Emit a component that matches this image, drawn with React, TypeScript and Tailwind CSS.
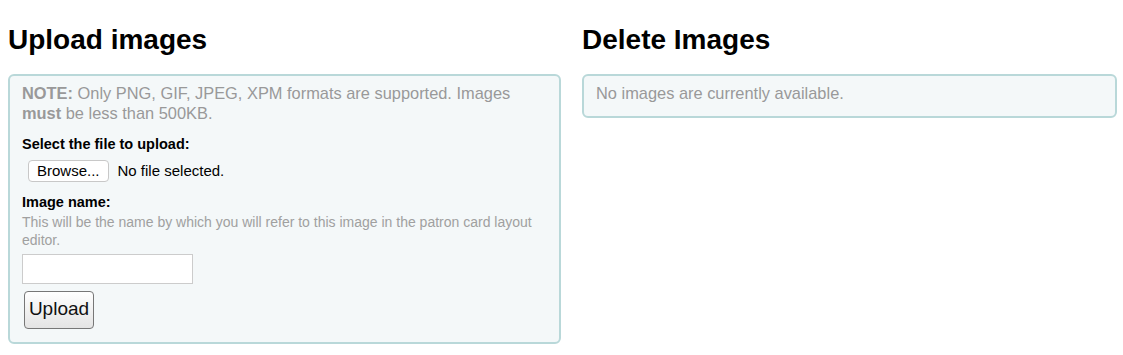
import React from "react";

export default function App() {
  return (
    <div className="w-[1123px] h-[355px] bg-white text-black" style={{ fontFamily: '"Liberation Sans", Arial, sans-serif' }}>
      <div className="flex gap-[21px] pl-[8px] pt-[24px]">
        <div className="w-[553px]">
          <h2 className="text-[28px] font-bold leading-[32px] mb-[18px]">Upload images</h2>
          <div className="border-2 border-[#b9d8d9] rounded-[6px] bg-[#f4f8f9] px-[12px] pt-[7px] pb-[13px] h-[270px]">
            <p className="text-[16.4px] leading-[20px] text-[#999999]">
              <b>NOTE:</b> Only PNG, GIF, JPEG, XPM formats are supported. Images
              <br />
              <b>must</b> be less than 500KB.
            </p>
            <div className="mt-[12px] text-[14.5px] font-bold leading-[18px]">Select the file to upload:</div>
            <div className="mt-[7px] flex items-center ml-[6px]">
              <button className="h-[22px] px-[8px] border border-[#c8c8c8] rounded-[4px] bg-white text-[15px] leading-[18px]">Browse...</button>
              <span className="ml-[9px] text-[15px]">No file selected.</span>
            </div>
            <div className="mt-[10px] text-[14.5px] font-bold leading-[18px]">Image name:</div>
            <p className="mt-[2px] text-[14px] leading-[18px] text-[#a0a0a0]">
              This will be the name by which you will refer to this image in the patron card layout
              <br />
              editor.
            </p>
            <input type="text" className="block mt-[5px] w-[171px] h-[30px] border border-[#cccccc] bg-white" />
            <button className="block mt-[7px] ml-[2px] w-[70px] h-[38px] border border-[#777777] rounded-[4px] bg-gradient-to-b from-[#ffffff] to-[#e4e4e4] text-[19px] text-[#111]">Upload</button>
          </div>
        </div>
        <div className="w-[535px]">
          <h2 className="text-[28px] font-bold leading-[32px] mb-[18px]">Delete Images</h2>
          <div className="border-2 border-[#b9d8d9] rounded-[6px] bg-[#f4f8f9] px-[12px] pt-[7px] h-[44px]">
            <p className="text-[16.4px] leading-[20px] text-[#999999]">No images are currently available.</p>
          </div>
        </div>
      </div>
    </div>
  );
}
